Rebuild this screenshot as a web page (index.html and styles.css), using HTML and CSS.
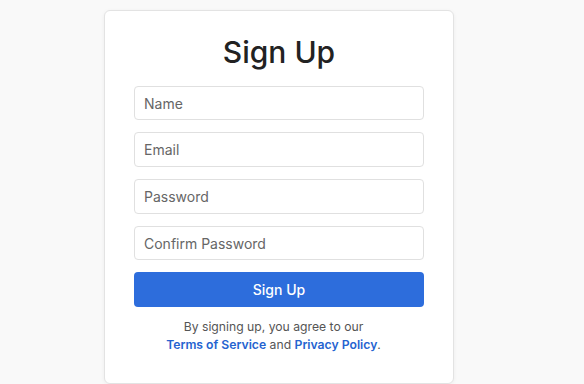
FILE: index.html
```html
<!DOCTYPE html>
<html lang="en">
<head>
<meta charset="utf-8">
<title>Sign Up</title>
<link rel="stylesheet" href="styles.css">
</head>
<body>
<div class="page">
  <form class="card">
    <h1 class="title">Sign Up</h1>
    <input class="field" type="text" placeholder="Name">
    <input class="field" type="email" placeholder="Email">
    <input class="field" type="password" placeholder="Password">
    <input class="field" type="password" placeholder="Confirm Password">
    <button class="btn" type="button">Sign Up</button>
    <p class="note">By signing up, you agree to our<br><a href="#">Terms of Service</a> and <a href="#">Privacy Policy</a>.</p>
  </form>
</div>
</body>
</html>
```
FILE: styles.css
```css
html, body {
  margin: 0;
  padding: 0;
  background: #f9f9f9;
  font-family: Inter, "Noto Sans", "Liberation Sans", sans-serif;
}
.page {
  padding: 10px 0 0 104px;
}
.card {
  box-sizing: border-box;
  width: 350px;
  background: #ffffff;
  border: 1px solid #e3e3e3;
  border-radius: 6px;
  box-shadow: 0 1px 4px rgba(0,0,0,0.05);
  padding: 23px 29px 28px;
  display: flex;
  flex-direction: column;
}
.title {
  margin: 0 0 15.5px;
  text-align: center;
  font-size: 30px;
  font-weight: 500;
  line-height: 36.3px;
  color: #222222;
}
.field {
  box-sizing: border-box;
  height: 34.67px;
  margin: 0 0 12px;
  padding: 0 9px;
  border: 1px solid #e0e0e0;
  border-radius: 4px;
  font-family: inherit;
  font-size: 14px;
  color: #333;
  background: #fff;
  outline: none;
}
.field::placeholder {
  color: #666666;
  opacity: 1;
}
.btn {
  height: 34.67px;
  border: none;
  border-radius: 4px;
  background: #2d6ddc;
  color: #ffffff;
  font-family: inherit;
  font-size: 14px;
  font-weight: 500;
  cursor: pointer;
}
.note {
  margin: 11px 0 0;
  padding-right: 11px;
  text-align: center;
  font-size: 12.2px;
  line-height: 18.3px;
  color: #555555;
}
.note a {
  color: #2563d0;
  font-weight: 600;
  text-decoration: none;
}
```
